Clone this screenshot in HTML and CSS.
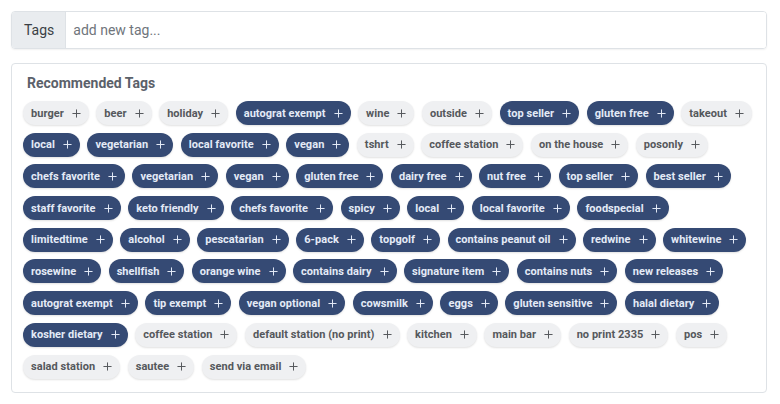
FILE: index.html
```html
<!DOCTYPE html>
<html>
<head>
<meta charset="utf-8">
<link rel="stylesheet" href="styles.css">
</head>
<body>
<div class="page">
  <div class="input-group">
    <span class="addon">Tags</span>
    <input class="tag-input" type="text" placeholder="add new tag...">
  </div>
  <div class="card">
    <h6 class="card-title">Recommended Tags</h6>
    <div class="tags" id="tags"></div>
  </div>
</div>
<script>
const tags = [
 ["burger",0],["beer",0],["holiday",0],["autograt exempt",1],["wine",0],["outside",0],["top seller",1],["gluten free",1],["takeout",0],
 ["local",1],["vegetarian",1],["local favorite",1],["vegan",1],["tshrt",0],["coffee station",0],["on the house",0],["posonly",0],
 ["chefs favorite",1],["vegetarian",1],["vegan",1],["gluten free",1],["dairy free",1],["nut free",1],["top seller",1],["best seller",1],
 ["staff favorite",1],["keto friendly",1],["chefs favorite",1],["spicy",1],["local",1],["local favorite",1],["foodspecial",1],
 ["limitedtime",1],["alcohol",1],["pescatarian",1],["6-pack",1],["topgolf",1],["contains peanut oil",1],["redwine",1],["whitewine",1],
 ["rosewine",1],["shellfish",1],["orange wine",1],["contains dairy",1],["signature item",1],["contains nuts",1],["new releases",1],
 ["autograt exempt",1],["tip exempt",1],["vegan optional",1],["cowsmilk",1],["eggs",1],["gluten sensitive",1],["halal dietary",1],
 ["kosher dietary",1],["coffee station",0],["default station (no print)",0],["kitchen",0],["main bar",0],["no print 2335",0],["pos",0],
 ["salad station",0],["sautee",0],["send via email",0]
];
const box = document.getElementById('tags');
const plus = '<svg class="plus" viewBox="0 0 10 10" width="10" height="10"><path d="M5 0.5V9.5M0.5 5H9.5" stroke="currentColor" stroke-width="1.1" fill="none"/></svg>';
for (const [t, d] of tags) {
  const el = document.createElement('span');
  el.className = 'tag ' + (d ? 'tag-dark' : 'tag-light');
  el.innerHTML = '<span class="tag-text"></span>' + plus;
  el.firstChild.textContent = t;
  box.appendChild(el);
}
</script>
</body>
</html>
```
FILE: styles.css
```css
* { box-sizing: border-box; }
body {
  margin: 0;
  background: #fff;
  font-family: Roboto, "Liberation Sans", sans-serif;
}
.page {
  padding: 11px 13px 11px 11px;
}
.input-group {
  display: flex;
  height: 38px;
  border: 1px solid #dee2e6;
  border-radius: 4px;
  box-shadow: 0 1px 2px rgba(0,0,0,0.06);
  overflow: hidden;
}
.addon {
  display: flex;
  align-items: center;
  padding: 0 11px 0 12px;
  background: #e9ecef;
  border-right: 1px solid #dee2e6;
  color: #3a3f45;
  font-size: 14px;
}
.tag-input {
  flex: 1;
  border: 0;
  outline: none;
  padding: 0 8px 0 7px;
  font-family: Roboto, sans-serif;
  font-size: 14px;
  color: #333;
}
.tag-input::placeholder { color: #6f757c; }
.card {
  margin-top: 14px;
  border: 1px solid #dee2e6;
  border-radius: 4px;
  padding: 9px 11px 13px 11px;
}
.card-title {
  margin: 0 0 8px 4px;
  font-size: 14px;
  line-height: 20px;
  font-weight: 700;
  color: #5b616a;
}
.tags {
  display: flex;
  flex-wrap: wrap;
  column-gap: 7.5px;
  row-gap: 7.7px;
}
.tag {
  display: inline-flex;
  align-items: center;
  height: 24px;
  padding: 0 8px;
  border-radius: 12px;
  font-size: 11px;
  font-weight: 700;
  letter-spacing: 0.05px;
  white-space: nowrap;
  box-shadow: 0 1px 2px rgba(0,0,0,0.12);
}
.tag-dark { background: #354a74; color: #e4eaf7; }
.tag-light { background: #eff0f2; color: #55585c; }
.plus { margin-left: 8px; width: 9px; height: 9px; }
```
